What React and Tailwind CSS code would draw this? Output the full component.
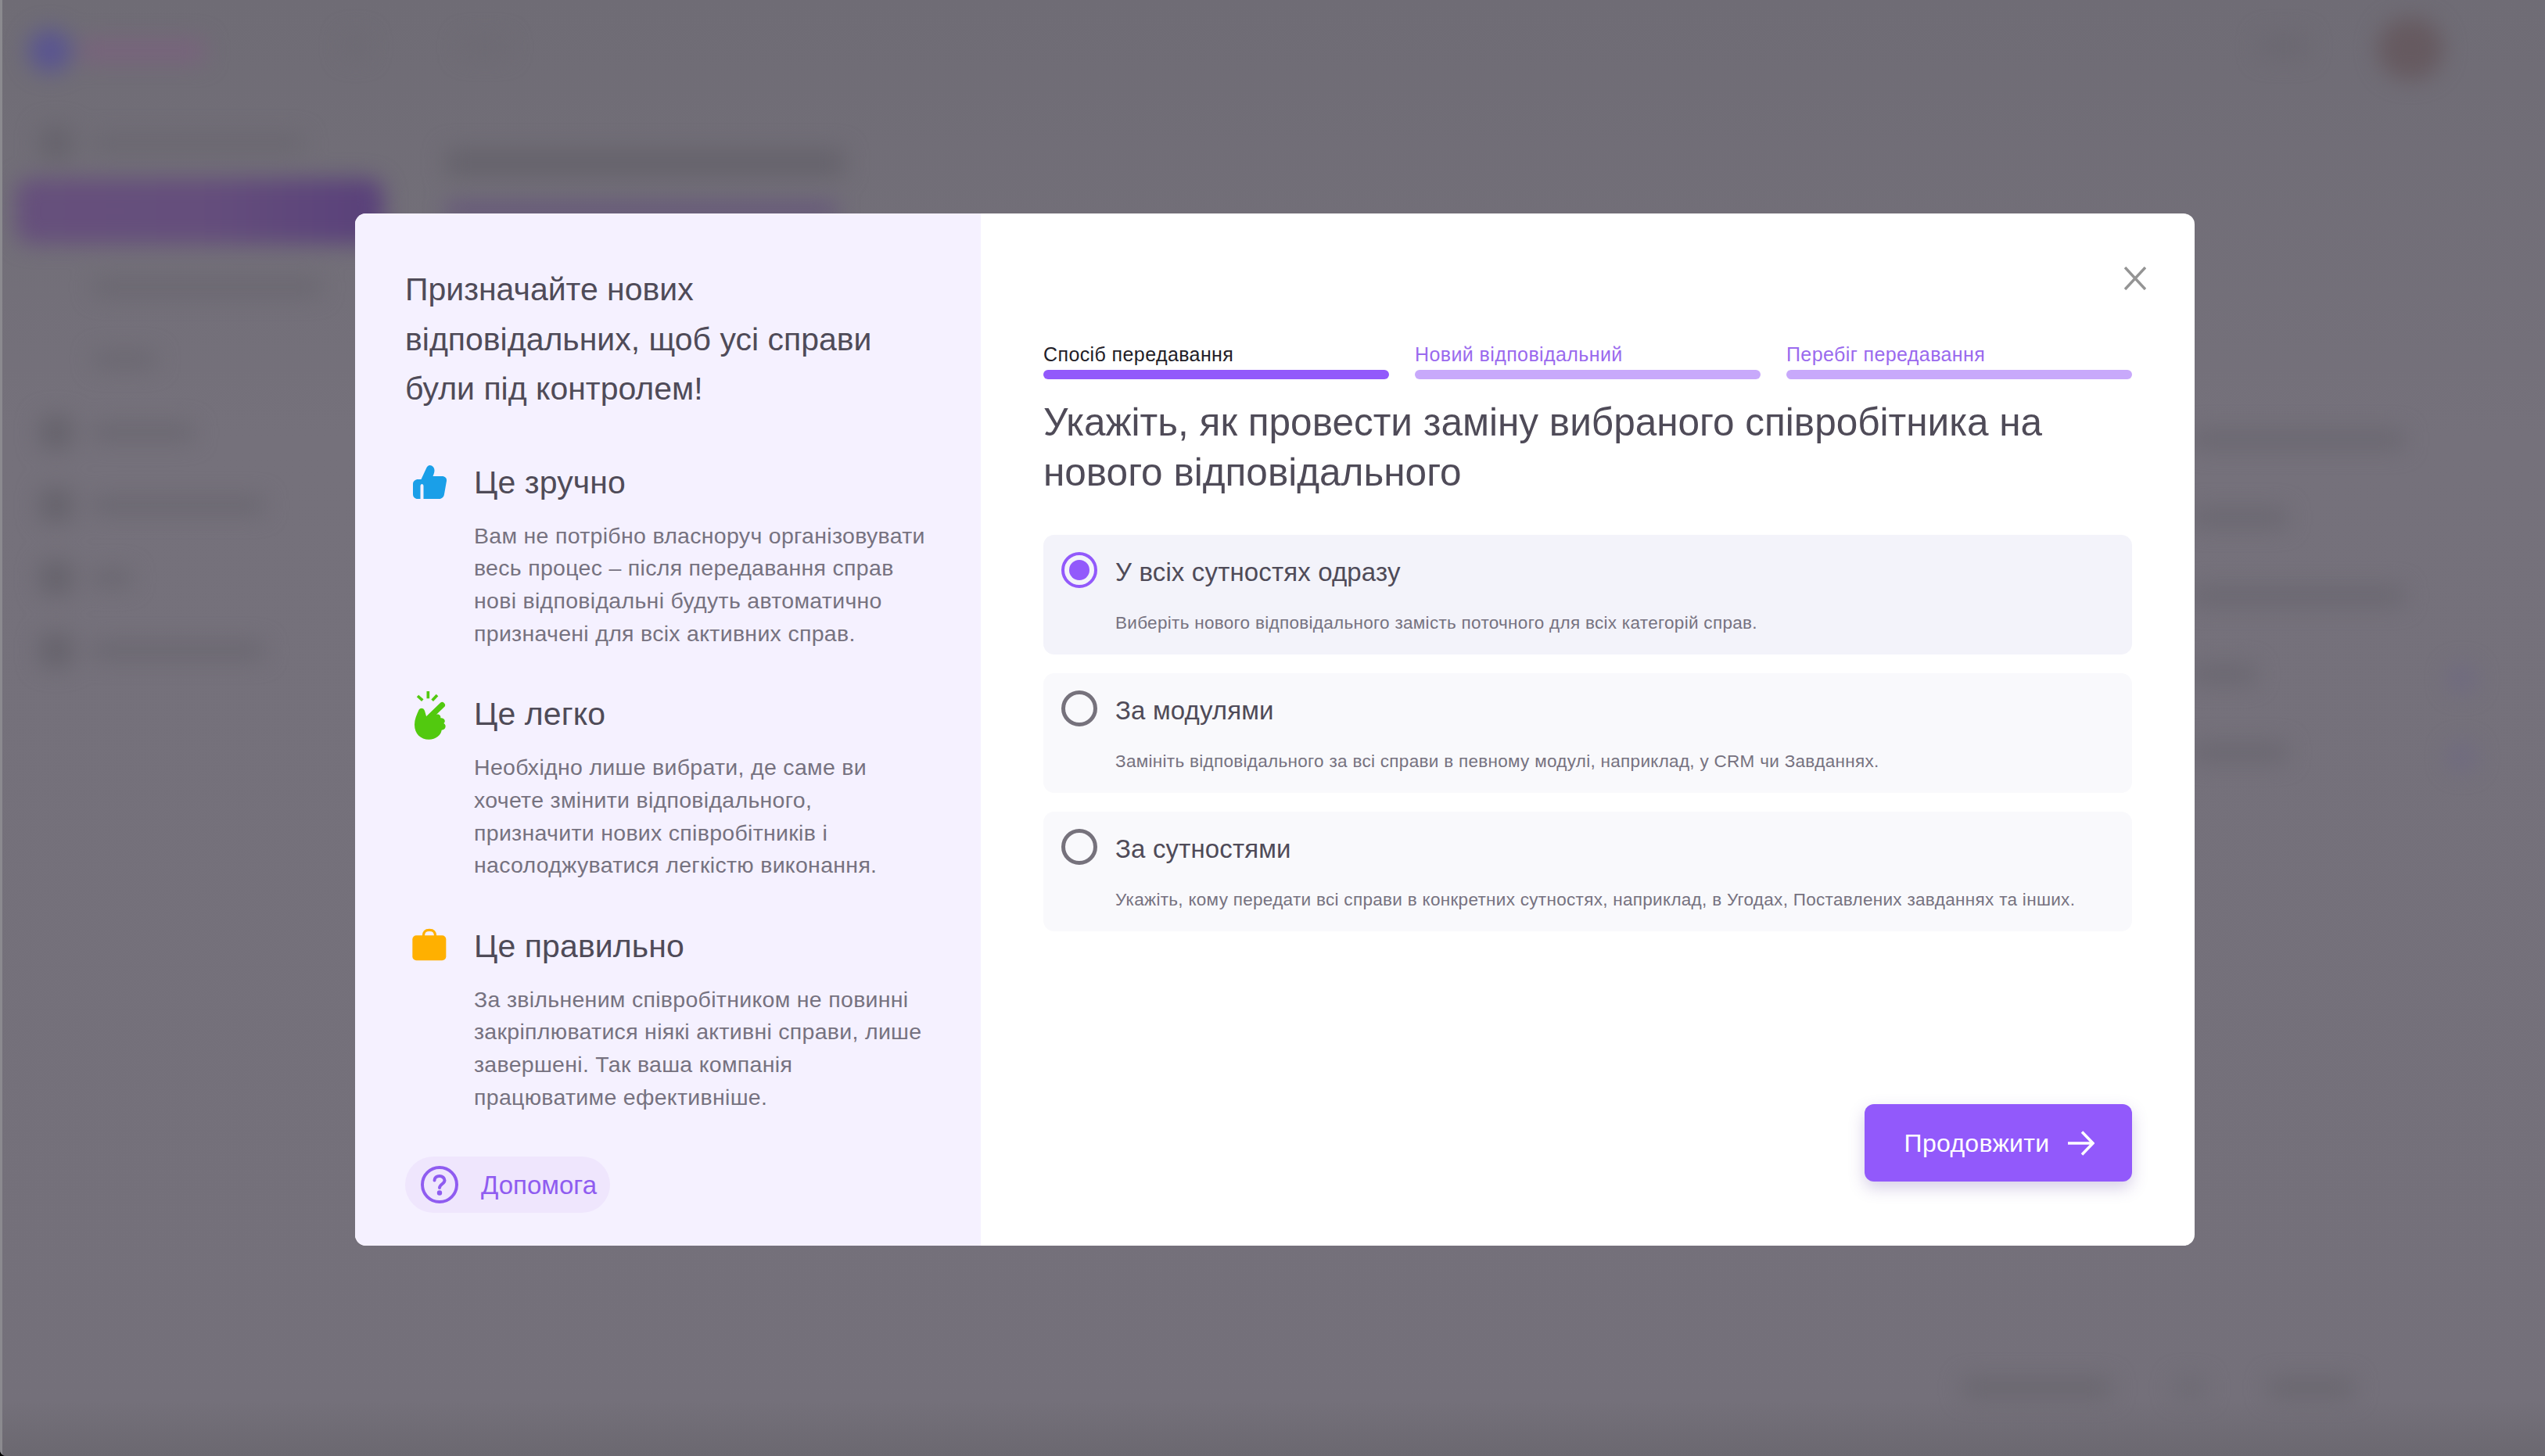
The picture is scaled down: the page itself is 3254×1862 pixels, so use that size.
const font = { fontFamily: '"Liberation Sans", Arial, sans-serif' };

function Thumb() {
  return (
    <svg width="44" height="44" viewBox="0 0 44 44" fill="#1a9fe8">
      <path d="M13.5 43V26.5C13.5 23 9.5 23 9.5 26.5V43H6C2.5 43 0 40.5 0 37V24C0 20.5 3 18 6.5 18H10.5L17 4C18 1.5 20 0 21.5 0C25 0 27.5 3 27.5 6.5C27.5 9 26.5 11.5 25.5 14H37C41 14 43.5 16.5 43 20L40 37C39.5 40.5 37 43 33.5 43Z" />
    </svg>
  );
}
function Hand() {
  return (
    <svg width="70" height="80" viewBox="0 0 210 240" fill="#52c90f">
      <path d="M100 27V55M60 45L79 62M135 42L116 62" stroke="#52c90f" strokeWidth="11" fill="none" />
      <path d="M102 130L154 80" stroke="#52c90f" strokeWidth="22" strokeLinecap="round" fill="none" />
      <path d="M64 100C68 88 84 90 87 102L94 126L130 116C142 113 150 120 148 130C162 128 170 142 160 150C172 156 168 176 152 176C150 194 130 212 103 212C72 212 48 190 48 155C48 135 56 118 64 100Z" />
    </svg>
  );
}
function Briefcase() {
  return (
    <svg width="70" height="60" viewBox="0 0 210 180" fill="#ffb000">
      <path d="M82 58C82 40 90 34 105 34C120 34 128 40 128 58" stroke="#ffb000" strokeWidth="10" fill="none" />
      <rect x="40" y="55" width="129" height="96" rx="15" />
    </svg>
  );
}

function Feature({ icon, title, lines }) {
  return (
    <div className="flex h-[296.5px]">
      <div className="w-[92px] h-[68px] shrink-0 flex items-center -ml-[4px]">{icon}</div>
      <div>
        <div className="text-[41px] leading-[52px] tracking-[0.1px] text-[#4f4b58] mt-[8px]">{title}</div>
        <div className="mt-[22px] text-[28.5px] leading-[41.7px] tracking-[0.3px] text-[#767280] whitespace-nowrap">
          {lines.map((l) => (
            <div key={l}>{l}</div>
          ))}
        </div>
      </div>
    </div>
  );
}

function Step({ label, active }) {
  return (
    <div className="flex-1">
      <div className={`text-[25px] leading-[30px] tracking-[0.4px] whitespace-nowrap ${active ? 'text-[#222028]' : 'text-[#9a6aee]'}`}>{label}</div>
      <div className={`h-[12px] mt-[5px] rounded-full ${active ? 'bg-[#9259fb]' : 'bg-[#c8a9fb]'}`} />
    </div>
  );
}

function Option({ title, desc, active }) {
  return (
    <div className={`h-[153px] rounded-[14px] pl-[23px] pt-[22px] flex gap-[23px] ${active ? 'bg-[#f3f3fa]' : 'bg-[#f9f9fc]'}`}>
      {active ? (
        <div className="w-[46px] h-[46px] rounded-full border-[4px] border-[#9259fb] shrink-0 flex items-center justify-center">
          <div className="w-[26px] h-[26px] rounded-full bg-[#9259fb]" />
        </div>
      ) : (
        <div className="w-[46px] h-[46px] rounded-full border-[5px] border-[#76727c] shrink-0" />
      )}
      <div>
        <div className="text-[33px] leading-[40px] tracking-[0.15px] text-[#4f4b58] mt-[6px]">{title}</div>
        <div className="text-[22.5px] leading-[30px] tracking-[0.3px] text-[#767280] mt-[30px] whitespace-nowrap">{desc}</div>
      </div>
    </div>
  );
}

function SideRow({ w }) {
  return (
    <div className="h-[93px] flex items-center gap-[24px] pl-[50px]">
      <div className="w-[44px] h-[44px] rounded-[10px] bg-[#67646d]" />
      <div className={`h-[22px] rounded bg-[#6a6770] ${w}`} />
    </div>
  );
}

function Blob({ className }) {
  return <div className={`absolute blur-[14px] ${className}`} />;
}

export default function App() {
  return (
    <div className="relative w-[3254px] h-[1862px] overflow-hidden bg-black" style={font}>
      <div className="absolute inset-0 rounded-bl-[8px] overflow-hidden bg-gradient-to-b from-[#6f6c75] via-[#75717b] via-30% to-[#74707a]">
        {/* blurred page behind the dialog */}
        <div className="flex h-full blur-[14px]">
          <div className="w-[570px] shrink-0">
            <div className="h-[130px] flex items-center gap-[10px] pl-[36px]">
              <div className="w-[56px] h-[56px] rounded-full bg-[#5a5590]" />
              <div className="w-[160px] h-[30px] rounded bg-[#78637c]" />
            </div>
            <div className="mt-[6px] h-[90px]">
              <SideRow w="w-[270px]" />
            </div>
            <div className="ml-[20px] mt-[2px] h-[84px] w-[470px] rounded-[20px] bg-gradient-to-r from-[#66507c] via-[#654e7c] to-[#59407a]" />
            <div className="h-[94px] mt-[8px] flex items-center pl-[120px]">
              <div className="h-[22px] w-[290px] rounded bg-[#6a6770]" />
            </div>
            <div className="h-[92px] flex items-center pl-[120px]">
              <div className="h-[20px] w-[80px] rounded bg-[#6a6770]" />
            </div>
            <SideRow w="w-[130px]" />
            <SideRow w="w-[220px]" />
            <SideRow w="w-[50px]" />
            <SideRow w="w-[220px]" />
          </div>
          <div className="flex-1 pt-[190px] pr-[180px]">
            <div className="flex justify-between">
              <div>
                <div className="h-[36px] w-[510px] rounded bg-[#66636c]" />
                <div className="mt-[36px] h-[14px] w-[500px] rounded bg-[#5f4a7c]" />
              </div>
              <div className="mt-[360px] w-[270px] flex flex-col gap-[76px]">
                <div className="h-[24px] rounded bg-[#6a6770]" />
                <div className="h-[24px] w-[120px] rounded bg-[#6a6770]" />
                <div className="h-[24px] rounded bg-[#6a6770]" />
                <div className="h-[24px] w-[80px] rounded bg-[#6a6770]" />
                <div className="h-[24px] w-[120px] rounded bg-[#6a6770]" />
              </div>
            </div>
          </div>
        </div>
        {/* header and footer bits behind the dialog */}
        <Blob className="top-[22px] left-[3040px] w-[84px] h-[80px] rounded-full bg-[#665a60]" />
        <Blob className="top-[44px] left-[2890px] w-[60px] h-[30px] rounded bg-[#6b6871]" />
        <Blob className="top-[44px] left-[440px] w-[30px] h-[30px] rounded bg-[#6d6a73]" />
        <Blob className="top-[48px] left-[590px] w-[60px] h-[24px] rounded bg-[#6d6a73]" />
        <Blob className="top-[850px] left-[3130px] w-[36px] h-[36px] rounded-full bg-[#6f6a80]" />
        <Blob className="top-[950px] left-[3130px] w-[36px] h-[36px] rounded-full bg-[#6f6a80]" />
        <Blob className="bottom-[74px] left-[2510px] w-[190px] h-[26px] rounded bg-[#6a676f]" />
        <Blob className="bottom-[74px] left-[2780px] w-[40px] h-[26px] rounded bg-[#6d6a73]" />
        <Blob className="bottom-[74px] left-[2900px] w-[110px] h-[26px] rounded bg-[#6a676f]" />
        <div className="absolute inset-x-0 bottom-0 h-[70px] bg-gradient-to-b from-transparent to-[#6b6870]" />
        <div className="absolute inset-y-0 left-0 w-[3px] bg-[#8b8a8f]" />

        {/* dialog */}
        <div className="absolute left-[454px] top-[273px] w-[2352px] h-[1320px] rounded-[14px] overflow-hidden flex bg-white">
          <div className="w-[800px] shrink-0 bg-[#f5f1ff] pl-[64px] pt-[66px]">
            <div className="text-[41px] leading-[63.6px] text-[#4f4b58] whitespace-nowrap">
              <div>Призначайте нових</div>
              <div>відповідальних, щоб усі справи</div>
              <div>були під контролем!</div>
            </div>
            <div className="mt-[53px]">
              <Feature
                icon={<div className="ml-[14px]"><Thumb /></div>}
                title="Це зручно"
                lines={[
                  'Вам не потрібно власноруч організовувати',
                  'весь процес – після передавання справ',
                  'нові відповідальні будуть автоматично',
                  'призначені для всіх активних справ.',
                ]}
              />
              <Feature
                icon={<div className="mt-[4px]"><Hand /></div>}
                title="Це легко"
                lines={[
                  'Необхідно лише вибрати, де саме ви',
                  'хочете змінити відповідального,',
                  'призначити нових співробітників і',
                  'насолоджуватися легкістю виконання.',
                ]}
              />
              <Feature
                icon={<div className="-mt-[4px]"><Briefcase /></div>}
                title="Це правильно"
                lines={[
                  'За звільненим співробітником не повинні',
                  'закріплюватися ніякі активні справи, лише',
                  'завершені. Так ваша компанія',
                  'працюватиме ефективніше.',
                ]}
              />
            </div>
            <div className="mt-[7px] w-[262px] h-[72px] rounded-full bg-[#efe6fd] flex items-center pl-[20px] gap-[29px]">
              <svg width="48" height="48" viewBox="0 0 48 48" fill="none" stroke="#8f5cf0" strokeWidth="4" strokeLinecap="round">
                <circle cx="24" cy="24" r="22" />
                <path d="M17.5 18.5C17.5 15 20.5 13 24 13C27.5 13 30.5 15.5 30.5 18.5C30.5 23 24 23.5 24 28" />
                <circle cx="24" cy="34.5" r="1.2" fill="#8f5cf0" />
              </svg>
              <span className="text-[33px] text-[#8f5cf0]">Допомога</span>
            </div>
          </div>

          <div className="relative flex-1 px-[80px] pt-[165px]">
            <button className="absolute top-[68px] right-[62px]">
              <svg width="28" height="30" viewBox="0 0 28 30" fill="none" stroke="#949494" strokeWidth="3.5">
                <path d="M1 1L27 29M27 1L1 29" />
              </svg>
            </button>
            <div className="flex gap-[33px]">
              <Step label="Спосіб передавання" active />
              <Step label="Новий відповідальний" />
              <Step label="Перебіг передавання" />
            </div>
            <div className="mt-[23px] text-[49.5px] leading-[63.6px] text-[#4f4b58] whitespace-nowrap">
              <div>Укажіть, як провести заміну вибраного співробітника на</div>
              <div>нового відповідального</div>
            </div>
            <div className="mt-[49px] flex flex-col gap-[24px]">
              <Option active title="У всіх сутностях одразу" desc="Виберіть нового відповідального замість поточного для всіх категорій справ." />
              <Option title="За модулями" desc="Замініть відповідального за всі справи в певному модулі, наприклад, у CRM чи Завданнях." />
              <Option title="За сутностями" desc="Укажіть, кому передати всі справи в конкретних сутностях, наприклад, в Угодах, Поставлених завданнях та інших." />
            </div>
            <div className="mt-[221px] flex justify-end">
              <button className="w-[342px] h-[99px] pl-[3px] rounded-[12px] bg-[#9259fb] shadow-[0_8px_20px_rgba(90,60,160,0.25)] flex items-center justify-center gap-[24px] text-white text-[32px] tracking-[0.3px]">
                <span>Продовжити</span>
                <svg width="34" height="32" viewBox="0 0 34 32" fill="none" stroke="white" strokeWidth="3.5">
                  <path d="M0 16H32M18 1.5L32 16L18 30.5" />
                </svg>
              </button>
            </div>
          </div>
        </div>
      </div>
    </div>
  );
}
